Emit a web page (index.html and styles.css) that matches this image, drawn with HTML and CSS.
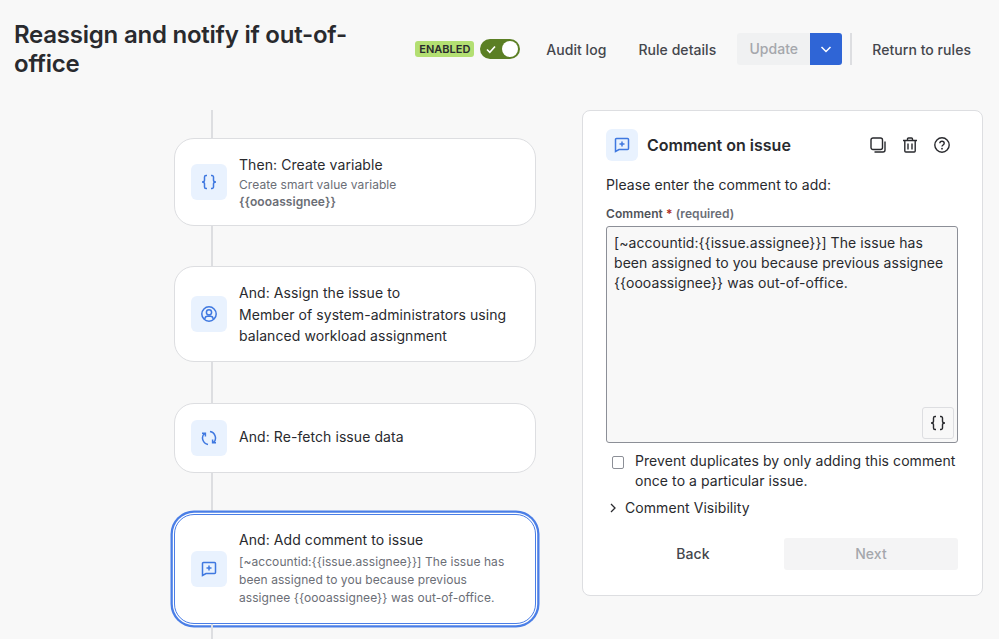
FILE: index.html
```html
<!DOCTYPE html>
<html lang="en">
<head>
<meta charset="utf-8">
<title>Reassign and notify if out-of-office</title>
<link rel="stylesheet" href="styles.css">
</head>
<body>
<header class="header">
  <h1 class="title">Reassign and notify if out-of-office</h1>
  <div class="actions">
    <span class="lozenge">ENABLED</span>
    <span class="toggle">
      <svg class="toggle-check" viewBox="0 0 12 12" width="12" height="12"><path d="M2 6.500l2.800 2.800L10 3.500" fill="none" stroke="#fff" stroke-width="1.600"/></svg>
      <span class="toggle-knob"></span>
    </span>
    <a class="link link-audit">Audit log</a>
    <a class="link link-details">Rule details</a>
    <span class="split">
      <span class="update">Update</span>
      <span class="split-arrow"><svg viewBox="0 0 12 12" width="12" height="12"><path d="M1.500 4L6 8.500 10.500 4" fill="none" stroke="#fff" stroke-width="1.500"/></svg></span>
    </span>
    <span class="divider"></span>
    <a class="link link-return">Return to rules</a>
  </div>
</header>
<main class="main">
  <section class="flow">
    <div class="line line-top"></div>
    <article class="card card-var">
      <span class="icon-box"><svg viewBox="0 0 16 16" width="16" height="16"><path d="M6 1.500H5A1.500 1.500 0 0 0 3.500 3v3.200C3.500 7.200 2.800 8 1 8c1.800 0 2.500.8 2.500 1.800V13A1.500 1.500 0 0 0 5 14.500h1M10 1.500h1A1.500 1.500 0 0 1 12.500 3v3.200c0 1 .7 1.800 2.500 1.800-1.800 0-2.500.8-2.500 1.800V13a1.500 1.500 0 0 1-1.500 1.500h-1" class="ico"/></svg></span>
      <div class="card-text">
        <div class="card-title">Then: Create variable</div>
        <div class="card-sub">Create smart value variable<br><b>{{oooassignee}}</b></div>
      </div>
    </article>
    <div class="line line-40"></div>
    <article class="card card-assign">
      <span class="icon-box"><svg viewBox="0 0 16 16" width="16" height="16"><circle cx="8" cy="8" r="7.200" class="ico"/><circle cx="8" cy="6.300" r="2.600" class="ico"/><path d="M3.800 13c.2-1.800 1.200-2.700 2.700-2.700h3c1.500 0 2.500.9 2.700 2.700" class="ico"/></svg></span>
      <div class="card-text">
        <div class="card-title">And: Assign the issue to</div>
        <div class="card-body">Member of system-administrators using balanced workload assignment</div>
      </div>
    </article>
    <div class="line line-41"></div>
    <article class="card card-fetch">
      <span class="icon-box"><svg viewBox="0 0 16 16" width="16" height="16"><path d="M7 14.500A6.600 6.600 0 0 1 3.300 3.500M9 1.500A6.600 6.600 0 0 1 12.700 12.500M1 3.200h3.400V6.500M15 12.800h-3.400V9.500" class="ico"/></svg></span>
      <div class="card-text card-text-fetch">
        <div class="card-title">And: Re-fetch issue data</div>
      </div>
    </article>
    <div class="line line-41"></div>
    <article class="card card-selected">
      <span class="icon-box"><svg viewBox="0 0 16 16" width="16" height="16"><path d="M2.500 1.500h11a1 1 0 0 1 1 1v9a1 1 0 0 1-1 1H5L1.500 14.500V2.500a1 1 0 0 1 1-1zM8 4.500v5M5.500 7h5" class="ico"/></svg></span>
      <div class="card-text">
        <div class="card-title">And: Add comment to issue</div>
        <div class="card-sub card-sub-long">[~accountid:{{issue.assignee}}] The issue has been assigned to you because previous assignee {{oooassignee}} was out-of-office.</div>
      </div>
    </article>
    <div class="line line-end"></div>
  </section>
  <aside class="panel">
    <div class="panel-head">
      <span class="icon-box icon-box-panel"><svg viewBox="0 0 16 16" width="16" height="16"><path d="M2.500 1.500h11a1 1 0 0 1 1 1v9a1 1 0 0 1-1 1H5L1.500 14.500V2.500a1 1 0 0 1 1-1zM8 4.500v5M5.500 7h5" class="ico"/></svg></span>
      <h2 class="panel-title">Comment on issue</h2>
      <div class="panel-tools">
        <svg viewBox="0 0 16 16" width="16" height="16"><rect x="1" y="1" width="11.500" height="11.500" rx="2" class="tool"/><path d="M15 4.500v8.500a2 2 0 0 1-2 2H4.500" class="tool"/></svg>
        <svg viewBox="0 0 16 16" width="16" height="16"><path d="M1 3.500h14M5.500 3.500V2a1 1 0 0 1 1-1h3a1 1 0 0 1 1 1v1.500M2.800 3.500v10.500a1 1 0 0 0 1 1h8.400a1 1 0 0 0 1-1V3.500M6 6.500v6M10 6.500v6" class="tool"/></svg>
        <svg viewBox="0 0 16 16" width="16" height="16"><circle cx="8" cy="8" r="7.200" class="tool"/><path d="M5.800 6.200C5.900 5 6.800 4.200 8 4.200s2.200.8 2.200 2c0 1.800-2.200 1.700-2.200 3.400" class="tool"/><circle cx="8" cy="11.700" r=".9" fill="#292a2e"/></svg>
      </div>
    </div>
    <p class="prompt">Please enter the comment to add:</p>
    <label class="field-label">Comment <span class="req">*</span> <span class="field-hint">(required)</span></label>
    <div class="textarea">
      [~accountid:{{issue.assignee}}] The issue has been assigned to you because previous assignee {{oooassignee}} was out-of-office.
      <span class="smart-btn"><svg viewBox="0 0 16 16" width="16" height="16"><path d="M6 1.500H5A1.500 1.500 0 0 0 3.500 3v3.200C3.500 7.200 2.800 8 1 8c1.800 0 2.500.8 2.500 1.800V13A1.500 1.500 0 0 0 5 14.500h1M10 1.500h1A1.500 1.500 0 0 1 12.500 3v3.200c0 1 .7 1.800 2.500 1.800-1.800 0-2.500.8-2.500 1.800V13a1.500 1.500 0 0 1-1.500 1.500h-1" class="tool"/></svg></span>
    </div>
    <div class="check-row">
      <span class="checkbox"></span>
      <span class="check-label">Prevent duplicates by only adding this comment once to a particular issue.</span>
    </div>
    <div class="visibility">
      <svg viewBox="0 0 10 10" width="10" height="10"><path d="M3 1L7 5 3 9" fill="none" stroke="#292a2e" stroke-width="1.300"/></svg>
      <span>Comment Visibility</span>
    </div>
    <div class="panel-foot">
      <span class="btn-back">Back</span>
      <span class="btn-next">Next</span>
    </div>
  </aside>
</main>
</body>
</html>
```
FILE: styles.css
```css
* { box-sizing: border-box; }
html, body { margin: 0; height: 639px; overflow: hidden; }
body {
  background: #f8f8f8;
  color: #292a2e;
  font-family: Inter, "Liberation Sans", sans-serif;
  font-size: 14px;
  letter-spacing: 0.07px;
}
.header {
  height: 110px;
  display: flex;
  align-items: flex-start;
  justify-content: space-between;
  padding: 20px 0 0 14px;
}
.title {
  margin: 0;
  width: 370px;
  font-size: 24px;
  line-height: 29px;
  font-weight: 600;
  letter-spacing: -0.23px;
  color: #292a2e;
}
.actions {
  display: flex;
  align-items: center;
  height: 32px;
  margin-top: 13px;
  padding-right: 28px;
  color: #44464c;
  font-size: 14px;
  font-weight: 500;
  letter-spacing: 0.05px;
}
.lozenge {
  background: #b3df72;
  color: #292a2e;
  font-size: 11px;
  font-weight: 600;
  line-height: 16px;
  padding: 0 4px;
  border-radius: 3px;
  margin-right: 6px;
  width: 59px;
  text-align: center;
  white-space: nowrap;
  letter-spacing: 0;
}
.toggle {
  position: relative;
  width: 40px;
  height: 20px;
  border-radius: 10px;
  background: #5b7f24;
  display: block;
}
.toggle-check { position: absolute; left: 5px; top: 4px; }
.toggle-knob {
  position: absolute;
  right: 2px;
  top: 2px;
  width: 16px;
  height: 16px;
  border-radius: 50%;
  background: #fff;
}
.link { display: block; white-space: nowrap; }
.link-audit { margin-left: 26px; }
.link-details { margin-left: 32px; }
.split { display: flex; height: 32px; margin-left: 21px; }
.update {
  width: 73px;
  background: #f0f1f2;
  color: #a5a7ac;
  border-radius: 3px 0 0 3px;
  line-height: 32px;
  text-align: center;
}
.split-arrow {
  width: 32px;
  background: #2f65d6;
  border-radius: 0 3px 3px 0;
  display: flex;
  align-items: center;
  justify-content: center;
}
.divider { width: 2px; height: 32px; background: #dddee1; margin: 0 20px 0 8px; }
.main { display: flex; align-items: flex-start; padding-left: 174px; }
.flow { width: 362px; display: flex; flex-direction: column; }
.line { width: 2px; background: #dddee1; margin-left: 37px; }
.line-top { height: 28px; }
.line-40 { height: 40px; }
.line-41 { height: 41px; }
.line-end { height: 16px; }
.card {
  display: flex;
  align-items: center;
  background: #fff;
  border: 1px solid #dddee1;
  border-radius: 20px;
  padding: 0 16px;
}
.card-var { height: 88px; }
.card-assign { height: 96px; }
.card-fetch { height: 70px; }
.card-selected {
  height: 110px;
  border-radius: 20px;
  border: 1px solid #4a7ee6;
  box-shadow: 0 0 0 1.200px #fff, 0 0 0 3.500px #4a7ee6;
}
.icon-box {
  flex: none;
  width: 36px;
  height: 36px;
  border-radius: 6px;
  background: #e9f2fe;
  display: flex;
  align-items: center;
  justify-content: center;
}
.ico { fill: none; stroke: #3f78e0; stroke-width: 1.500; }
.tool { fill: none; stroke: #292a2e; stroke-width: 1.400; }
.card-text { margin-left: 12px; min-width: 0; flex: 1; }
.card-text-fetch { margin-bottom: 2px; }
.card-title { font-size: 14px; line-height: 20px; color: #292a2e; }
.card-sub { font-size: 12px; line-height: 17px; color: #6b6e76; margin-top: 1px; }
.card-sub b { font-weight: 600; }
.card-sub-long { line-height: 18px; margin-top: 3px; margin-bottom: 2px; }
.card-body { font-size: 14px; line-height: 21px; margin-top: 1px; color: #292a2e; }
.panel {
  margin-left: 46px;
  width: 401px;
  height: 486px;
  background: #fff;
  border: 1px solid #dddee1;
  border-radius: 8px;
  padding: 18px 24px 0 23px;
}
.panel-head { display: flex; align-items: center; height: 32px; }
.icon-box-panel { width: 32px; height: 32px; }
.panel-title { margin: 0 0 0 9px; font-size: 16px; line-height: 20px; font-weight: 600; flex: 1; letter-spacing: 0; }
.panel-tools { display: flex; gap: 16px; margin-right: 8px; }
.prompt { margin: 14px 0 0; line-height: 20px; }
.field-label { display: block; margin-top: 11px; font-size: 12px; line-height: 16px; font-weight: 600; color: #505258; }
.req { color: #ae2e24; }
.field-hint { color: #6b6e76; }
.textarea {
  position: relative;
  margin-top: 4px;
  height: 217px;
  background: #f8f8f8;
  border: 1px solid #8c8f97;
  border-radius: 3px;
  padding: 6px 7px;
  font-size: 14px;
  line-height: 20px;
  color: #292a2e;
}
.smart-btn {
  position: absolute;
  right: 3px;
  bottom: 3px;
  width: 32px;
  height: 32px;
  background: #f8f8f8;
  border: 1px solid #dddee1;
  border-radius: 3px;
  display: flex;
  align-items: center;
  justify-content: center;
}
.check-row { display: flex; margin: 8px 0 0 6px; line-height: 20px; }
.checkbox {
  flex: none;
  width: 12px;
  height: 13px;
  margin: 5px 11px 0 0;
  background: #fff;
  border: 1px solid #8c8f97;
  border-radius: 2px;
}
.check-label { flex: 1; margin-right: -4px; }
.visibility { display: flex; align-items: center; gap: 7px; margin: 7px 0 0 2px; line-height: 20px; }
.panel-foot { display: flex; margin-top: 20px; height: 32px; }
.btn-back {
  width: 174px;
  line-height: 32px;
  text-align: center;
  font-weight: 500;
  color: #44464c;
}
.btn-next {
  margin-left: 4px;
  width: 174px;
  background: #f4f4f5;
  color: #a5a7ac;
  border-radius: 3px;
  line-height: 32px;
  text-align: center;
  font-weight: 500;
}
```
